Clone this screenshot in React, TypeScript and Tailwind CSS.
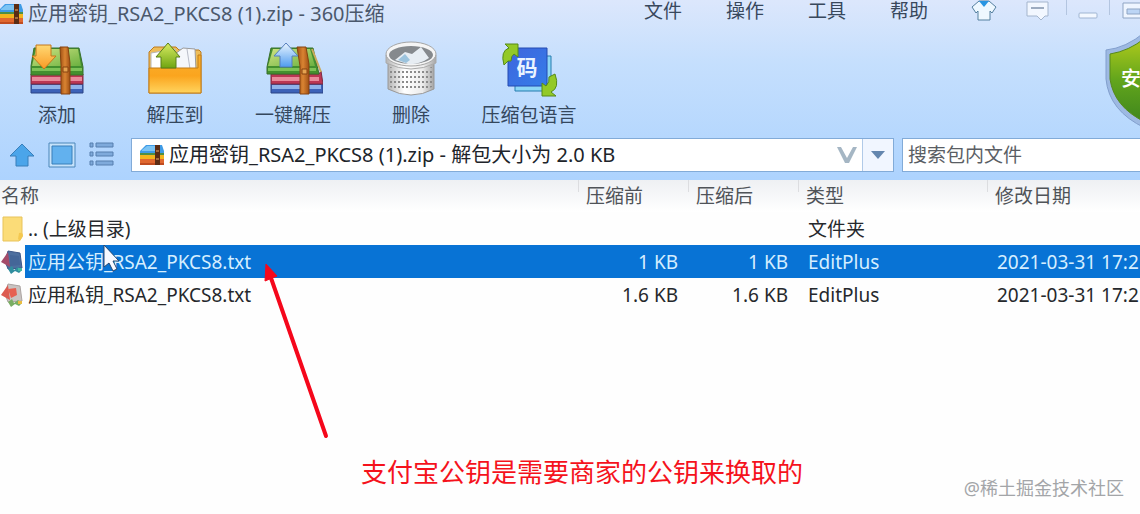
import React from "react";

type Entry = { name: string; before: string; after: string; type: string; date: string; icon: React.ReactNode; selected?: boolean };

function ZipSmall() {
  return (
    <svg viewBox="0 0 26 24" className="h-6 w-[26px] shrink-0" aria-hidden="true">
      <path d="M1 8 7 2H23L25 8V12H1Z" fill="#3f9be6" />
      <path d="M3 7 8 3H16V8H3Z" fill="#7cc4f4" />
      <path d="M1 10H25V13H1Z" fill="#4d8f45" />
      <path d="M1 12H25V17H1Z" fill="#f3b51e" />
      <path d="M1 16H25V22H1Z" fill="#e0672f" />
      <path d="M1 20H25V22H1Z" fill="#c04c20" />
      <path d="M16 2H21V22H16Z" fill="#5b2c14" />
      <path d="M17 7H20V9H17ZM17 15H20V17H17Z" fill="#a86b3d" />
    </svg>
  );
}

function Books({ open = false }: { open?: boolean }) {
  const id = open ? "extract" : "add";
  return (
    <svg viewBox="0 0 60 58" className="h-[58px] w-[60px]" aria-hidden="true">
      <defs>
        <linearGradient id={`${id}-top`} x1="0" x2="1" y1="0" y2="1">
          <stop offset="0" stopColor="#cfe382" />
          <stop offset="1" stopColor="#6bb140" />
        </linearGradient>
        <linearGradient id={`${id}-arrow`} x1="0" x2="0" y1="0" y2="1">
          <stop offset="0" stopColor={open ? "#eaf5ff" : "#ffd873"} />
          <stop offset="1" stopColor={open ? "#4f9cf0" : "#f99b24"} />
        </linearGradient>
        <linearGradient id={`${id}-strap`}>
          <stop offset="0" stopColor="#a04f14" />
          <stop offset="0.5" stopColor="#d98432" />
          <stop offset="1" stopColor="#a04f14" />
        </linearGradient>
      </defs>
      <path d={open ? "M8 44H60V53H8Z" : "M4 44H56V53H4Z"} fill="#3d62b8" stroke="#2c4585" />
      <path d={open ? "M9 45H58V49H9Z" : "M5 45H55V49H5Z"} fill="#8fb2ea" />
      <path d={open ? "M8 34H56L58 31 60 44H8Z" : "M4 34H56V44H4Z"} fill="#bb3654" stroke="#7d2a40" />
      <path d={open ? "M9 37H56V41H9Z" : "M5 37H55V41H5Z"} fill="#e8899a" />
      <path d={open ? "M8 8H50L56 34H4V27Z" : "M7 8H52L56 27V35H4V26Z"} fill="#43902f" stroke="#39702a" />
      <path d={open ? "M10 9H47L52 26H5Z" : "M9 9H51L54 26H5Z"} fill={`url(#${id}-top)`} />
      <path d={open ? "M5 28H53V31H5Z" : "M5 28H55V31H5Z"} fill="#7cc257" />
      {open && <path d="M49 9 58 32" stroke="#c9a85c" strokeWidth="2" />}
      <path d={open ? "M34 7H43L46 24V54H37V26Z" : "M33 7H41L43 23V54H34V25Z"} fill={`url(#${id}-strap)`} stroke="#854310" />
      <path d={open ? "M39 29H44V34H39Z" : "M36 27H41V32H36Z"} fill="#e5a24f" stroke="#854310" />
      {open ? (
        <path d="M23 3 35 16H29V27H17V16H11Z" fill={`url(#${id}-arrow)`} stroke="#557fbd" strokeLinejoin="round" />
      ) : (
        <path d="M9 5H24V16H29L17 29 5 16H9Z" fill={`url(#${id}-arrow)`} stroke="#c4761d" strokeLinejoin="round" />
      )}
    </svg>
  );
}

function FolderIcon() {
  return (
    <svg viewBox="0 0 60 58" className="h-[58px] w-[60px]" aria-hidden="true">
      <defs>
        <linearGradient id="folder-front" x1="0" x2="0" y1="0" y2="1">
          <stop offset="0" stopColor="#f9b02e" />
          <stop offset="0.55" stopColor="#fba51e" />
          <stop offset="1" stopColor="#ffd45e" />
        </linearGradient>
        <linearGradient id="folder-arrow" x1="0" x2="0" y1="0" y2="1">
          <stop offset="0" stopColor="#d9ec62" />
          <stop offset="1" stopColor="#6fa512" />
        </linearGradient>
      </defs>
      <path d="M4 12 9 7H31L34 10H54L56 12V53H4Z" fill="#eebd59" stroke="#bd7b1d" />
      <path d="M6 13 30 9V30H6Z" fill="#fff" stroke="#b5b5b5" />
      <path d="M30 14 38 8 50 9 51 30H30Z" fill="#f5f7fb" stroke="#9b9b9b" />
      <path d="M42 9 45 29" stroke="#b9bdc8" />
      <path d="M4 28H53V15H56V53H4Z" fill="url(#folder-front)" stroke="#c27c16" />
      <path d="M23 3 35 17H31V28H16V17H11Z" fill="url(#folder-arrow)" stroke="#587e18" strokeLinejoin="round" />
    </svg>
  );
}

function TrashIcon() {
  return (
    <svg viewBox="0 0 60 58" className="h-[58px] w-[60px]" aria-hidden="true">
      <defs>
        <linearGradient id="bin-body">
          <stop offset="0" stopColor="#b4b4b4" />
          <stop offset="0.35" stopColor="#fff" />
          <stop offset="0.75" stopColor="#ececec" />
          <stop offset="1" stopColor="#a5a5a5" />
        </linearGradient>
        <pattern id="bin-holes" width="4" height="5" patternUnits="userSpaceOnUse">
          <path d="M1 1H3V3H1Z" fill="#8a8a8a" />
        </pattern>
      </defs>
      <path d="M7 16V49Q30 61 53 49V16Z" fill="url(#bin-body)" stroke="#999" />
      <path d="M9 27Q30 34 51 27V47Q30 55 9 47Z" fill="url(#bin-holes)" />
      <path d="M5 15V23Q30 35 55 23V15Z" fill="url(#bin-body)" stroke="#aaa" />
      <ellipse cx="30" cy="14" rx="25" ry="12" fill="#f5f5f5" stroke="#a5a5a5" />
      <ellipse cx="30" cy="15" rx="22" ry="9" fill="#85898d" />
      <path d="M14 20 24 12 31 14 40 7 48 18Q38 25 27 24Z" fill="#e7edf3" />
      <path d="M17 20 24 14 29 20 25 23Z" fill="#9cc3dd" />
    </svg>
  );
}

function LanguageIcon() {
  return (
    <svg viewBox="0 0 60 58" className="h-[58px] w-[60px]" aria-hidden="true">
      <defs>
        <linearGradient id="code-face" x1="0" x2="1" y1="0" y2="1">
          <stop offset="0" stopColor="#3f65dd" />
          <stop offset="1" stopColor="#347de9" />
        </linearGradient>
      </defs>
      <path d="M16 16H52V51H16Z" fill="#8cd6f6" stroke="#267caf" />
      <path d="M9 8H48V46H9Z" fill="url(#code-face)" stroke="#254bb0" />
      <text x="28" y="35" textAnchor="middle" fontSize="21" fontWeight="700" fill="#eaf4ff" fontFamily="Noto Sans CJK SC, sans-serif">码</text>
      <path d="M5 25Q1 11 10 8L6 4H19V17L15 14Q12 16 12 21L9 21Z" fill="#93c927" stroke="#568a19" strokeLinejoin="round" />
      <path d="M56 34Q61 48 52 52L57 56H43V43L47 46Q51 42 50 37Z" fill="#93c927" stroke="#568a19" strokeLinejoin="round" />
    </svg>
  );
}

function ParentFolder() {
  return (
    <svg viewBox="0 0 24 28" className="h-7 w-6" aria-hidden="true">
      <path d="M3 2H22V22L19 26H3Z" fill="#fbdc78" stroke="#e8c35a" />
      <path d="M19 18Q23 17 23 21L20 26 18 24Z" fill="#f4c850" />
    </svg>
  );
}

function TextFile({ selected = false }: { selected?: boolean }) {
  return (
    <svg viewBox="0 0 24 28" className="h-7 w-6" aria-hidden="true">
      <path d="M8 3 20 5 22 20 8 21 5 13Z" fill={selected ? "#4d6f9f" : "#c9c4c2"} stroke={selected ? "#3c5788" : "#aca4a2"} />
      <path d="M1 14 8 4 10 19Z" fill={selected ? "#a54b69" : "#dc5b51"} />
      <path d={selected ? "M10 7 19 8 20 17 10 18Z" : "M8 8 16 7 17 14 11 17Z"} fill={selected ? "#446698" : "#e66051"} />
      <path d="M8 21 12 18 14 22 18 19 22 22 19 25 15 23 11 26Z" fill={selected ? "#318e9f" : "#79ad63"} />
      <path d="M18 20H22V23H18Z" fill={selected ? "#44b7a0" : "#e9bd42"} />
    </svg>
  );
}

const tools = [
  { label: "添加", icon: <Books /> },
  { label: "解压到", icon: <FolderIcon /> },
  { label: "一键解压", icon: <Books open /> },
  { label: "删除", icon: <TrashIcon /> },
  { label: "压缩包语言", icon: <LanguageIcon /> },
];

const entries: Entry[] = [
  { name: ".. (上级目录)", before: "", after: "", type: "文件夹", date: "", icon: <ParentFolder /> },
  { name: "应用公钥_RSA2_PKCS8.txt", before: "1 KB", after: "1 KB", type: "EditPlus", date: "2021-03-31 17:2", icon: <TextFile selected />, selected: true },
  { name: "应用私钥_RSA2_PKCS8.txt", before: "1.6 KB", after: "1.6 KB", type: "EditPlus", date: "2021-03-31 17:2", icon: <TextFile /> },
];

function TitleBar() {
  return (
    <div className="flex h-7 items-center">
      <div className="-ml-0.5 flex flex-1 items-center gap-1 text-xl whitespace-nowrap text-[#4b586c]">
        <ZipSmall />
        <h1>应用密钥_RSA2_PKCS8 (1).zip - 360压缩</h1>
      </div>
      <div className="flex h-[22px] shrink-0 items-center self-start">
        <nav className="flex gap-11 pr-[42px] text-[#38485c]">
          {["文件", "操作", "工具", "帮助"].map((m) => (
            <button key={m} type="button" className="leading-[22px]">{m}</button>
          ))}
        </nav>
        <button type="button" aria-label="皮肤" className="w-14">
          <svg viewBox="0 0 28 24" className="h-6 w-7" aria-hidden="true">
            <path d="M9 2H19L26 8 22 14 20 12V21H8V12L6 14 2 8Z" fill="#eef8ff" stroke="#55809f" strokeLinejoin="round" />
            <path d="M9 2H19L14 8Z" fill="#2795e2" />
          </svg>
        </button>
        <button type="button" aria-label="反馈" className="w-10">
          <svg viewBox="0 0 24 24" className="size-6" aria-hidden="true">
            <path d="M1 3H22V17H19L15 21 11 17H1Z" fill="#f2f7ff" stroke="#a4b5cd" />
            <path d="M5 9H18" stroke="#9cabc0" strokeWidth="2" />
          </svg>
        </button>
        <button type="button" aria-label="最小化" className="flex h-[19px] w-11 items-end justify-center self-start bg-linear-to-b">
          <svg viewBox="0 0 44 19" className="h-[19px] w-11" aria-hidden="true">
            <path d="M0.5 0V15M43.5 0V15" stroke="#b3c5e0" />
            <rect x="13" y="13" width="18" height="5" rx="1" fill="#f3f8ff" stroke="#a0b5d2" />
          </svg>
        </button>
        <button type="button" aria-label="最大化" className="w-[30px] overflow-hidden pl-3">
          <svg viewBox="0 0 24 20" className="h-5 w-6 max-w-none" aria-hidden="true">
            <path d="M1 2H22V17H1Z" fill="#eef5ff" stroke="#8fa5c4" />
            <path d="M5 8H18V13H5Z" fill="#bcd5f5" stroke="#8fa5c4" />
          </svg>
        </button>
      </div>
    </div>
  );
}

function AddressBar() {
  return (
    <div className="flex h-[34px] items-center">
      <div className="flex w-[131px] shrink-0 items-center gap-3 pl-2">
        <button type="button" aria-label="上一级">
          <svg viewBox="0 0 28 26" className="h-[26px] w-7" aria-hidden="true">
            <path d="M14 2 26 14H20V24H8V14H2Z" fill="#4ba5ea" stroke="#397fba" strokeLinejoin="round" />
          </svg>
        </button>
        <button type="button" aria-label="图标视图">
          <svg viewBox="0 0 28 26" className="h-[26px] w-7" aria-hidden="true">
            <path d="M1 1H27V25H1Z" fill="#c5e2fa" stroke="#4b86b9" />
            <path d="M4 4H24V22H4Z" fill="#62b1ee" stroke="#397fb9" />
          </svg>
        </button>
        <button type="button" aria-label="列表视图">
          <svg viewBox="0 0 26 26" className="size-[26px]" aria-hidden="true">
            {[1, 10, 19].map((y) => (
              <g key={y} fill="#7faadb" stroke="#567eae">
                <path d={`M2 ${y}h3v4h-3z`} />
                <path d={`M8 ${y}h17v4h-17z`} />
              </g>
            ))}
          </svg>
        </button>
      </div>
      <div className="flex h-[34px] min-w-0 flex-1 items-center border border-[#82abd8] bg-white pl-[7px]">
        <ZipSmall />
        <input aria-label="路径" readOnly value="应用密钥_RSA2_PKCS8 (1).zip - 解包大小为 2.0 KB" className="min-w-0 flex-1 pl-1 text-xl text-[#20242a] outline-none" />
        <svg viewBox="0 0 22 20" className="mr-1 h-5 w-[22px]" aria-hidden="true">
          <path d="M1 2H5L11 13 17 2H21L13 18H9Z" fill="#a5b6c4" />
        </svg>
        <button type="button" aria-label="展开路径" className="flex h-full w-[31px] items-center justify-center border-l border-[#b1cae8] bg-[#f1f6ff]">
          <svg viewBox="0 0 16 10" className="h-2.5 w-4" aria-hidden="true">
            <path d="M1 1H15L8 9Z" fill="#6486ae" />
          </svg>
        </button>
      </div>
      <input aria-label="搜索包内文件" placeholder="搜索包内文件" className="ml-2 h-[34px] w-[238px] shrink-0 border border-r-0 border-[#82abd8] bg-white pl-[5px] outline-none placeholder:text-[#5a5e64]" />
    </div>
  );
}

function FileTable() {
  const heading = "p-0 text-left align-top font-normal whitespace-nowrap";
  return (
    <table className="w-full table-fixed border-collapse">
      <colgroup>
        <col className="w-[25px]" />
        <col />
        <col className="w-[110px]" />
        <col className="w-[110px]" />
        <col className="w-[189px]" />
        <col className="w-[153px]" />
      </colgroup>
      <thead>
        <tr className="h-8 bg-linear-to-b from-[#eef0f3] to-white text-[#4f5358]">
          <th colSpan={2} className="p-0 pl-px text-left font-normal">名称</th>
          {["压缩前", "压缩后", "类型", "修改日期"].map((h) => (
            <th key={h} className={heading}>
              <span className="flex h-8 items-center gap-[7px]">
                <span className="h-3 w-px self-start bg-[#dcdde0]" />
                {h}
              </span>
            </th>
          ))}
        </tr>
      </thead>
      <tbody>
        {entries.map((e) => {
          const tone = e.selected ? "bg-[#0873d5] text-[#d5eeff]" : "text-[#25282c]";
          return (
            <tr key={e.name} className="h-[33px] whitespace-nowrap">
              <td className="p-0">{e.icon}</td>
              <td className={`p-0 pl-[3px] ${tone}`}>{e.name}</td>
              <td className={`p-0 pr-2.5 text-right ${tone}`}>{e.before}</td>
              <td className={`p-0 pr-2.5 text-right ${tone}`}>{e.after}</td>
              <td className={`p-0 pl-2.5 ${tone}`}>{e.type}</td>
              <td className={`overflow-hidden p-0 pl-2.5 ${tone}`}>{e.date}</td>
            </tr>
          );
        })}
      </tbody>
    </table>
  );
}

export default function App() {
  return (
    <div className="relative min-h-screen overflow-hidden bg-[#fefefe] font-['Noto_Sans','Noto_Sans_CJK_SC',sans-serif] text-[19px] leading-7">
      <header className="relative bg-linear-to-b from-[#dce7fc] via-[#c5dffd] via-35% to-[#add3fe] pb-2">
        <TitleBar />
        <div className="-ml-0.5 flex pt-3">
          {tools.map((t) => (
            <button key={t.label} type="button" className="flex h-[98px] w-[118px] shrink-0 flex-col items-center text-[#34475d]">
              {t.icon}
              <span className="leading-[34px] whitespace-nowrap">{t.label}</span>
            </button>
          ))}
        </div>
        <AddressBar />
        <div className="absolute top-8 right-0 h-24 w-[35px] overflow-hidden">
          <svg viewBox="0 0 80 96" className="h-24 w-20 max-w-none" aria-label="安全">
            <defs>
              <linearGradient id="shield" x1="0" x2="0" y1="0" y2="1">
                <stop offset="0" stopColor="#b1cb1c" />
                <stop offset="0.5" stopColor="#62a51c" />
                <stop offset="1" stopColor="#3f861d" />
              </linearGradient>
            </defs>
            <path d="M1 18Q21 16 40 0Q59 16 79 18V47Q76 79 40 96Q4 79 1 47Z" fill="#9db9e2" stroke="#829fcd" />
            <path d="M5 22Q24 19 40 6Q56 19 75 22V47Q71 75 40 90Q9 75 5 47Z" fill="url(#shield)" stroke="#57891c" />
            <text x="16" y="54" fontSize="20" fontWeight="500" fill="#fff" fontFamily="Noto Sans CJK SC, sans-serif">安</text>
          </svg>
        </div>
      </header>
      <main>
        <FileTable />
        <p className="mt-[141px] pl-[361px] text-[26px] leading-10 whitespace-nowrap text-[#f5121c]">支付宝公钥是需要商家的公钥来换取的</p>
      </main>
      <svg viewBox="0 0 80 184" className="pointer-events-none absolute top-[260px] left-[256px] h-[184px] w-20" aria-hidden="true">
        <path d="M15 18 70 176" stroke="#f5071b" strokeWidth="4" strokeLinecap="round" />
        <path d="M10 4 21 16 9 21Z" fill="#f5071b" stroke="#f5071b" strokeLinejoin="round" />
      </svg>
      <svg viewBox="0 0 18 30" className="pointer-events-none absolute top-[243px] left-[102px] h-[30px] w-[18px]" aria-hidden="true">
        <path d="M2 2V24L7 20 11 28 15 26 11 18H17Z" fill="#f8f9ff" stroke="#25476f" strokeLinejoin="round" />
      </svg>
      <p className="absolute right-4 bottom-3 text-lg text-[#a3a5a8]">@稀土掘金技术社区</p>
    </div>
  );
}
